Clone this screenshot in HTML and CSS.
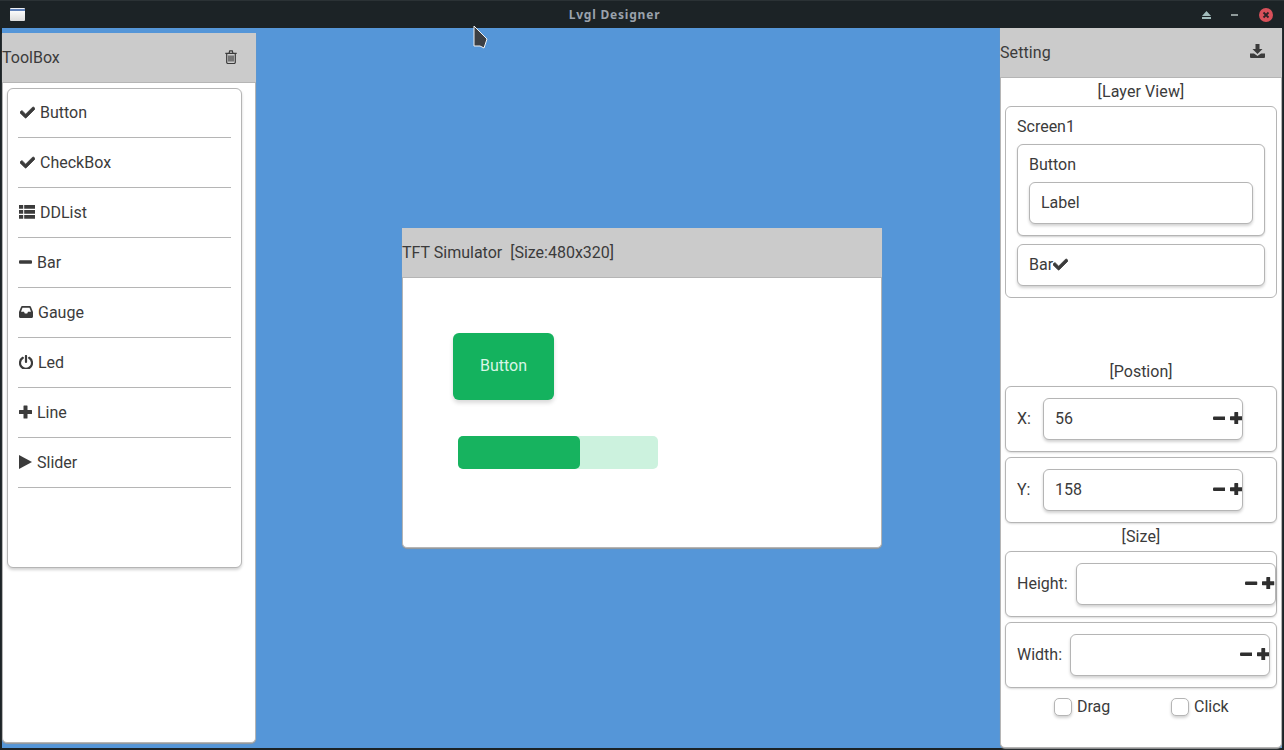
FILE: index.html
```html
<!DOCTYPE html>
<html lang="en">
<head>
    <meta charset="UTF-8">
    <meta name="viewport" content="width=device-width, initial-scale=1.0">
    <title>Lvgl Designer</title>
    <link rel="stylesheet" href="styles.css">
</head>
<body>
    <svg class="sprites" width="0" height="0">
        <symbol id="i-check" viewBox="0 0 512 512"><path stroke="currentColor" stroke-width="28" d="M173.9 439.4l-166.4-166.4c-10-10-10-26.2 0-36.2l36.2-36.2c10-10 26.2-10 36.2 0L192 312.7 432.1 72.6c10-10 26.2-10 36.2 0l36.2 36.2c10 10 10 26.2 0 36.2l-294.4 294.4c-10 10-26.2 10-36.2 0z"/></symbol>
        <symbol id="i-list" viewBox="0 0 16 14"><path d="M0 0h4.2v3.8H0zM5.2 0H16v3.8H5.2zM0 5h4.2v3.8H0zM5.2 5H16v3.8H5.2zM0 10h4.2v3.8H0zM5.2 10H16v3.8H5.2z"/></symbol>
        <symbol id="i-minus" viewBox="0 0 13 13"><rect x="0" y="4.700" width="13" height="3.600" rx="1"/></symbol>
        <symbol id="i-plus" viewBox="0 0 13 13"><path d="M4.500 .5a.5 .5 0 0 1 .5-.5h3a.5 .5 0 0 1 .5 .5v4h4a.5 .5 0 0 1 .5 .5v3a.5 .5 0 0 1-.5 .5h-4v4a.5 .5 0 0 1-.5 .5H5a.5 .5 0 0 1-.5-.5v-4h-4A.5 .5 0 0 1 0 8V5a.5 .5 0 0 1 .5-.5h4z"/></symbol>
        <symbol id="i-inbox" viewBox="0 0 14 12"><path fill-rule="evenodd" d="M3.200 0h7.600c.5 0 .9.3 1.100.7L14 6v4.500c0 .8-.6 1.500-1.400 1.500H1.400C.6 12 0 11.300 0 10.500V6L2.100.7C2.300.3 2.700 0 3.200 0zM3.500 1.800L2 5.800h3l.8 1.600h2.400L9 5.800h3l-1.500-4z"/></symbol>
        <symbol id="i-power" viewBox="0 0 14 14"><path fill="none" stroke="currentColor" stroke-width="2.200" stroke-linecap="round" d="M3.800 2.800a6 6 0 1 0 6.400 0M7 1v6"/></symbol>
        <symbol id="i-play" viewBox="0 0 13 14"><path d="M0 0l13 7-13 7z"/></symbol>
        <symbol id="i-trash" viewBox="0 0 12 14"><path fill="none" stroke="currentColor" stroke-width="1.200" d="M1.700 3.300h8.600v9a1.200 1.200 0 0 1-1.200 1.200H2.900a1.200 1.200 0 0 1-1.200-1.200zM.3 3.300h11.400M4 3.300L4.700.8h2.600L8 3.300"/><path stroke="currentColor" stroke-width="1.200" d="M4 5.500v6M6 5.500v6M8 5.500v6"/></symbol>
        <symbol id="i-save" viewBox="0 0 15 14"><path d="M5.500 0h4v5h3L7.500 10l-5-5h3z"/><path d="M0 9.500h4L7.500 12 11 9.500h4V13a1 1 0 0 1-1 1H1a1 1 0 0 1-1-1z"/></symbol>
    </svg>

    <header class="titlebar">
        <span class="app-icon"></span>
        <span class="app-title">Lvgl Designer</span>
        <div class="win-btns">
            <svg class="eject" width="9" height="8" viewBox="0 0 9 8"><path d="M4.500 0L9 5H0zM0 6h9v2H0z"/></svg>
            <span class="minimize"></span>
            <svg class="close" width="14" height="14" viewBox="0 0 14 14"><circle cx="7" cy="7" r="7" fill="#d8505a"/><path d="M4.500 4.500l5 5M9.500 4.500l-5 5" stroke="#2a2226" stroke-width="1.800"/></svg>
        </div>
    </header>

    <main class="desktop">
        <section class="win toolbox">
            <div class="win-head">
                <span>ToolBox</span>
                <svg class="head-icon trash"><use href="#i-trash"/></svg>
            </div>
            <div class="box tool-list">
                <div class="tool"><svg class="ic ic-check"><use href="#i-check"/></svg><span>Button</span></div>
                <div class="tool"><svg class="ic ic-check"><use href="#i-check"/></svg><span>CheckBox</span></div>
                <div class="tool"><svg class="ic ic-list"><use href="#i-list"/></svg><span>DDList</span></div>
                <div class="tool"><svg class="ic ic-sq"><use href="#i-minus"/></svg><span>Bar</span></div>
                <div class="tool"><svg class="ic ic-wide"><use href="#i-inbox"/></svg><span>Gauge</span></div>
                <div class="tool"><svg class="ic ic-wide"><use href="#i-power"/></svg><span>Led</span></div>
                <div class="tool"><svg class="ic ic-sq"><use href="#i-plus"/></svg><span>Line</span></div>
                <div class="tool"><svg class="ic ic-sq"><use href="#i-play"/></svg><span>Slider</span></div>
            </div>
        </section>

        <section class="win simulator">
            <div class="win-head">
                <span>TFT Simulator&nbsp; [Size:480x320]</span>
            </div>
            <div class="sim-btn">Button</div>
            <div class="sim-bar"><div class="sim-bar-fill"></div></div>
        </section>

        <section class="win setting">
            <div class="win-head">
                <span>Setting</span>
                <svg class="head-icon save"><use href="#i-save"/></svg>
            </div>
            <div class="group-title">[Layer View]</div>
            <div class="box layers">
                <div class="layer-name">Screen1</div>
                <div class="box layer-btn">
                    <div class="layer-name">Button</div>
                    <div class="box raised layer-label">Label</div>
                </div>
                <div class="box raised layer-bar">Bar<svg class="ic ic-check"><use href="#i-check"/></svg></div>
            </div>

            <div class="group-title pos-title">[Postion]</div>
            <div class="box field">
                <label class="pos-label">X:</label>
                <div class="box raised spin"><span>56</span><svg class="sp"><use href="#i-minus"/></svg><svg class="sp"><use href="#i-plus"/></svg></div>
            </div>
            <div class="box field">
                <label class="pos-label">Y:</label>
                <div class="box raised spin"><span>158</span><svg class="sp"><use href="#i-minus"/></svg><svg class="sp"><use href="#i-plus"/></svg></div>
            </div>
            <div class="group-title size-title">[Size]</div>
            <div class="box field">
                <label>Height:</label>
                <div class="box raised spin"><span></span><svg class="sp"><use href="#i-minus"/></svg><svg class="sp"><use href="#i-plus"/></svg></div>
            </div>
            <div class="box field">
                <label>Width:</label>
                <div class="box raised spin"><span></span><svg class="sp"><use href="#i-minus"/></svg><svg class="sp"><use href="#i-plus"/></svg></div>
            </div>
            <div class="checks">
                <div class="check"><span class="box raised tick"></span>Drag</div>
                <div class="check"><span class="box raised tick"></span>Click</div>
            </div>
        </section>

        <svg class="cursor" width="15" height="24" viewBox="0 0 15 24"><path d="M1 1L14 14 11 23 7 21 1 21z" fill="#3c3f44" stroke="#f2f2f2" stroke-width="1"/></svg>
    </main>
</body>
</html>
```

FILE: styles.css
```css
* {
    box-sizing: border-box;
}
html, body {
    height: 100%;
}
body {
    margin: 0;
    background-color: #1c2326;
    color: #3b3b3b;
    font-family: Roboto, sans-serif;
    font-size: 16px;
    overflow: hidden;
}
.sprites {
    position: absolute;
}
svg {
    fill: currentColor;
}

/* window manager bar */
.titlebar {
    position: relative;
    display: flex;
    align-items: center;
    height: 28px;
    padding: 0 11px 0 10px;
    border-top: 1px solid #2b3235;
}
.app-icon {
    width: 15px;
    height: 13px;
    background: linear-gradient(#eef1f5 0 1px, #5f80b8 1px 3px, #fbfbfb 3px, #dcdcdc);
    border-radius: 1px;
}
.app-title {
    position: absolute;
    left: 0;
    width: 1229px;
    text-align: center;
    color: #9aa2ac;
    font-family: "Noto Sans", sans-serif;
    font-size: 12px;
    font-weight: 700;
    letter-spacing: 0.8px;
}
.win-btns {
    display: flex;
    align-items: center;
    margin-left: auto;
}
.eject {
    color: #a2bcbc;
    margin-right: 20px;
}
.minimize {
    width: 7px;
    height: 2px;
    background-color: #8f9a9a;
    margin-right: 21px;
}

/* desktop */
.desktop {
    position: relative;
    height: 720px;
    margin: 0 2px;
    background-color: #5596d8;
}
.win {
    position: absolute;
    background-color: #fff;
    border: 1px solid #b5b5b5;
    border-top: 0;
    border-radius: 0 0 5px 5px;
    box-shadow: 0 1px 1px #999;
}
.win-head {
    display: flex;
    align-items: center;
    justify-content: space-between;
    height: 50px;
    margin: 0 -1px;
    background-color: #cbcbcb;
    border-bottom: 1px solid #b5b5b5;
}
.box {
    background-color: #fff;
    border: 1px solid #b5b5b5;
    border-radius: 6px;
}
.raised {
    box-shadow: 0 2px 3px rgba(0, 0, 0, 0.18);
}
.head-icon {
    color: #3b3b3b;
}

/* toolbox */
.toolbox {
    left: 0;
    top: 5px;
    width: 254px;
    height: 710px;
}
.trash {
    width: 12px;
    height: 14px;
    margin: 0 19px 2px 0;
}
.tool-list {
    width: 235px;
    height: 480px;
    margin: 5px 0 0 4px;
    padding: 0 10px;
    box-shadow: 0 2px 3px rgba(0, 0, 0, 0.18);
}
.tool {
    display: flex;
    align-items: center;
    height: 50px;
    padding: 0 0 1px 1px;
    border-bottom: 1px solid #b5b5b5;
}
.tool:first-child {
    height: 49px;
    padding-bottom: 2px;
}
.ic {
    flex: none;
}
.ic-check {
    width: 15px;
    height: 15px;
    margin: 0 5px 0 1px;
}
.ic-list {
    width: 16px;
    height: 14px;
    margin-right: 5px;
}
.ic-sq {
    width: 13px;
    height: 14px;
    margin-right: 5px;
}
.ic-wide {
    width: 14px;
    height: 14px;
    margin-right: 5px;
}

/* simulator */
.simulator {
    left: 400px;
    top: 200px;
    width: 480px;
    height: 320px;
}
.sim-btn {
    position: absolute;
    left: 50px;
    top: 105px;
    width: 101px;
    height: 67px;
    padding-bottom: 2px;
    display: flex;
    align-items: center;
    justify-content: center;
    color: #d9f5e6;
    background-color: #14b25e;
    border-radius: 6px;
    box-shadow: 0 3px 4px rgba(0, 0, 0, 0.15);
}
.sim-bar {
    position: absolute;
    left: 55px;
    top: 208px;
    width: 200px;
    height: 33px;
    background-color: #ccf2de;
    border-radius: 5px;
}
.sim-bar-fill {
    width: 122px;
    height: 100%;
    background-color: #17b35f;
    border-radius: 5px;
}

/* settings */
.setting {
    left: 998px;
    top: 0;
    width: 282px;
    height: 720px;
    display: flex;
    flex-direction: column;
    align-items: flex-start;
}
.setting .win-head {
    width: calc(100% + 2px);
    flex: none;
}
.setting .win-head span {
    letter-spacing: 0.1px;
}
.save {
    width: 15px;
    height: 14px;
    margin: 0 17px 4px 0;
}
.group-title {
    width: 100%;
    height: 28px;
    line-height: 27px;
    text-align: center;
    letter-spacing: 0.1px;
    flex: none;
}
.layers {
    width: 272px;
    height: 192px;
    margin-left: 4px;
    padding: 10px 11px;
    flex: none;
}
.layer-name {
    height: 19px;
    line-height: 19px;
}
.layer-btn {
    height: 92px;
    margin-top: 8px;
    padding: 10px 11px;
    box-shadow: 0 1px 2px rgba(0, 0, 0, 0.2);
}
.layer-label {
    height: 42px;
    margin-top: 8px;
    padding-left: 11px;
    line-height: 39px;
}
.layer-bar {
    display: flex;
    align-items: center;
    height: 42px;
    margin-top: 8px;
    padding: 0 0 2px 11px;
}
.layer-bar .ic-check {
    margin: 0;
}
.pos-title {
    height: 30px;
    line-height: 31px;
    margin-top: 58px;
    letter-spacing: 0;
}
.size-title {
    margin-top: -5px;
    line-height: 28px;
}
.field {
    display: flex;
    align-items: center;
    width: 272px;
    height: 66px;
    margin: 0 0 5px 4px;
    padding-left: 11px;
    box-shadow: 0 1px 2px rgba(0, 0, 0, 0.15);
    flex: none;
}
.field label {
    margin-right: 8px;
    padding-bottom: 2px;
}
.field .pos-label {
    width: 26px;
    margin-right: 0;
}
.spin {
    display: flex;
    align-items: center;
    width: 200px;
    height: 42px;
    padding: 0 0 2px 11px;
}
.spin span {
    flex: 1;
}
.sp {
    width: 12.5px;
    height: 12.5px;
    margin-left: 4.5px;
    color: #2f2f2f;
}
.checks {
    display: flex;
    width: 100%;
    margin-top: 4px;
    padding-left: 53px;
}
.check {
    display: flex;
    align-items: center;
    flex: none;
    width: 117px;
}
.tick {
    width: 18px;
    height: 18px;
    margin-right: 5px;
    border-radius: 5px;
}

.cursor {
    position: absolute;
    left: 471px;
    top: -3px;
}
```
